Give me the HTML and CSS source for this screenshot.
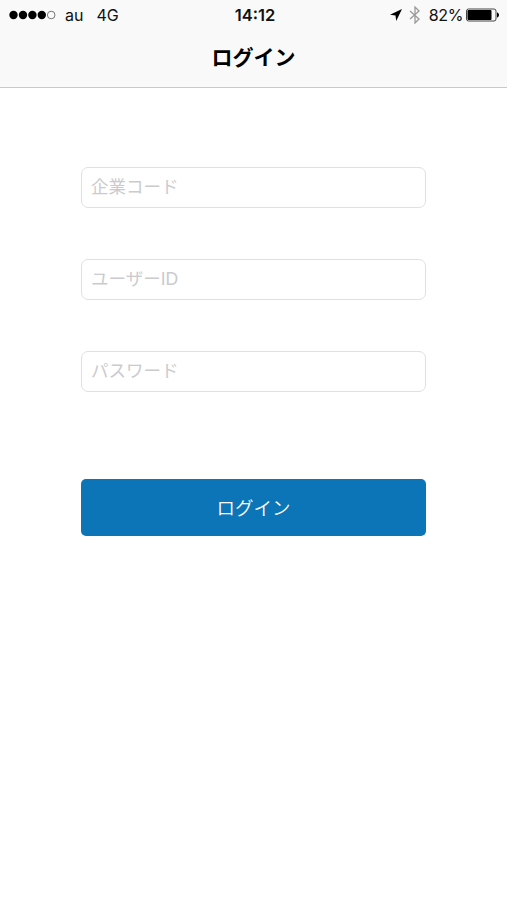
FILE: index.html
```html
<!DOCTYPE html>
<html lang="ja">
<head>
<meta charset="utf-8">
<title>ログイン</title>
<link rel="stylesheet" href="styles.css">
</head>
<body>
<header class="header">
  <div class="status">
    <div class="carrier">
      <svg class="signal" width="48" height="12" viewBox="0 0 48 12"><g fill="#000"><circle cx="4.5" cy="6" r="4.2"/><circle cx="14" cy="6" r="4.2"/><circle cx="23.4" cy="6" r="4.2"/><circle cx="32.8" cy="6" r="4.2"/></g><circle cx="42.2" cy="6" r="3.8" fill="none" stroke="#666" stroke-width=".9"/></svg>
      <span class="name">au</span><span class="network">4G</span>
    </div>
    <span class="time">14:12</span>
    <div class="power">
      <svg class="location" width="14" height="14" viewBox="0 0 14 14"><path d="M13 1 1 6.8l5.5.7.7 5.5z"/></svg>
      <svg class="bluetooth" width="12" height="18" viewBox="0 0 12 18"><path d="m1 5 9 8-4 4V1l4 4-9 8" fill="none" stroke="#999" stroke-width="1.3"/></svg>
      <span class="percent">82%</span>
      <svg class="battery" width="34" height="14" viewBox="0 0 34 14"><rect x=".5" y="1" width="29.5" height="12" rx="2" fill="none" stroke="#444"/><rect x="1.5" y="2" width="24" height="10" rx="1"/><path d="M31 4.5c2.700.5 2.700 4.500 0 5z"/></svg>
    </div>
  </div>
  <h1 class="title">ログイン</h1>
</header>
<form class="login">
  <input class="field" type="text" placeholder="企業コード">
  <input class="field" type="text" placeholder="ユーザーID">
  <input class="field" type="password" placeholder="パスワード">
  <button class="submit" type="button">ログイン</button>
</form>
</body>
</html>
```
FILE: styles.css
```css
* { box-sizing: border-box; }
body { margin: 0; background: #fff; font-family: Inter, "Noto Sans CJK JP", sans-serif; }
.header { height: 88px; background: #f9f9f9; border-bottom: 1px solid #c9c9cb; }
.status { height: 30px; display: grid; grid-template-columns: 1fr auto 1fr; align-items: center; padding: 0 7px 0 9px; font-size: 16px; line-height: 30px; color: #111; }
.carrier, .power { display: flex; align-items: center; }
.power { justify-content: flex-end; }
.name { margin-left: 8px; }
.network { margin-left: 13px; }
.time { padding-left: 1px; font-weight: 600; font-size: 16.5px; }
.bluetooth { margin: 0 8px 0 6px; }
.percent { letter-spacing: -.4px; }
.battery { margin-left: 3px; }
.title { margin: 0; padding-top: 1px; font-size: 21px; font-weight: 700; line-height: 54px; text-align: center; }
.login { display: flex; flex-direction: column; width: 345px; margin: 79px auto 0; }
.field { height: 41px; margin: 0 0 51px; padding: 0 9px; border: 1px solid #e0e0e0; border-radius: 7px; background: #fff; font: 17.5px "Liberation Sans", "Noto Sans CJK JP", sans-serif; }
.field::placeholder { color: #cbcbce; opacity: 1; }
.submit { height: 57px; margin-top: 35.5px; padding: 0 0 1px; border: 0; border-radius: 5px; background: #0b75b8; color: #fff; font: 18.5px "Noto Sans CJK JP", sans-serif; font-weight: 350; }
```
